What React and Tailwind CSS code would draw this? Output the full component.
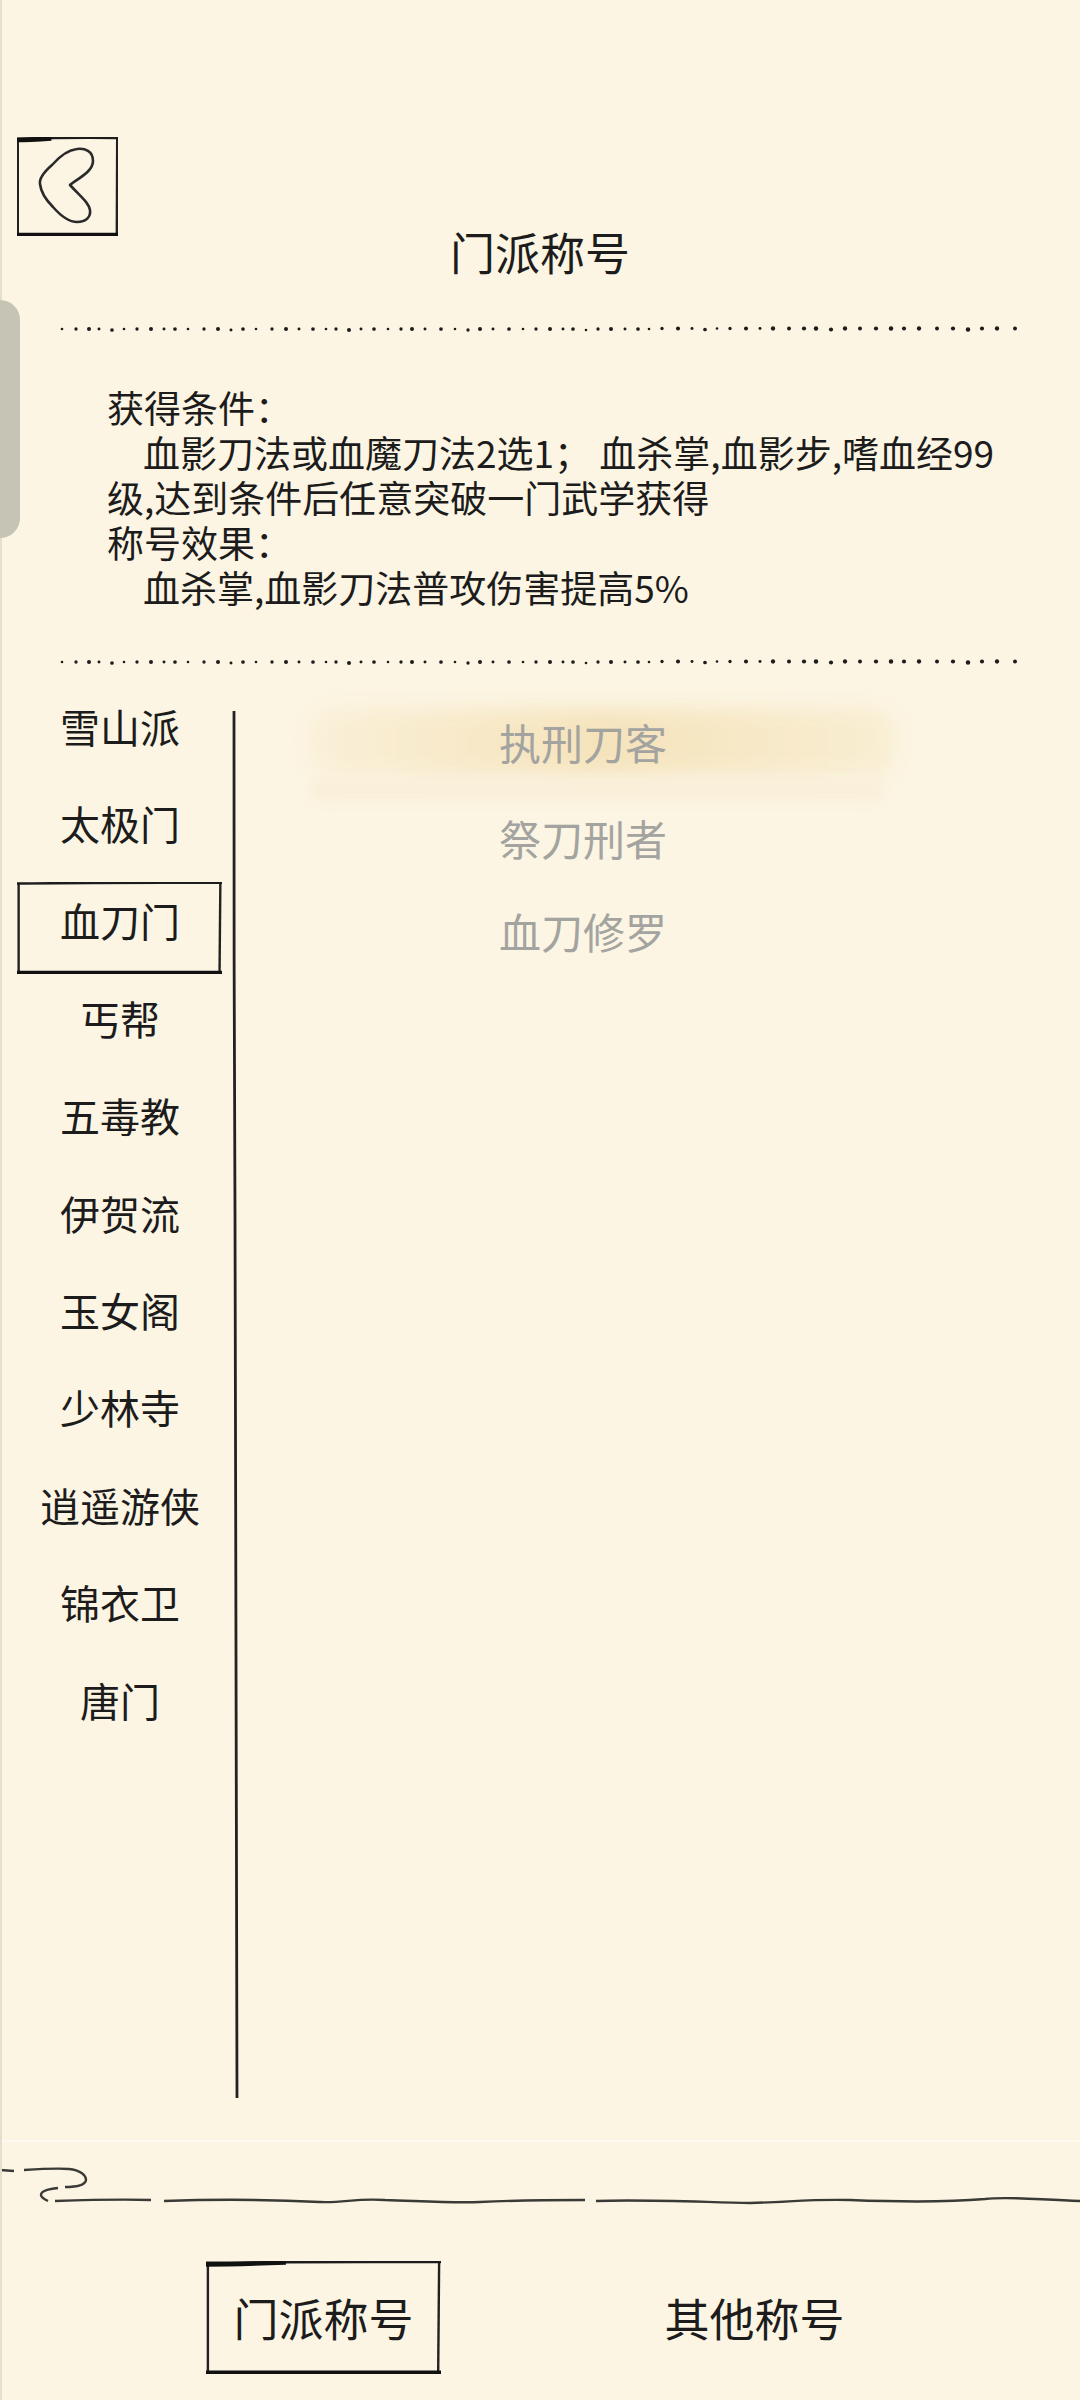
import React from "react";

const sects = ["雪山派", "太极门", "血刀门", "丐帮", "五毒教", "伊贺流", "玉女阁", "少林寺", "逍遥游侠", "锦衣卫", "唐门"];
const titles = ["执刑刀客", "祭刀刑者", "血刀修罗"];

const dotGaps = [15, 14, 11, 14, 13, 14, 15, 14, 12, 14, 17, 15, 14, 13, 14, 17, 15, 14];

const DotLine = () => {
  const dots = [];
  let x = 2;
  let i = 0;
  while (x < 958) {
    const wobble = ((i * 7) % 5) * 0.18;
    dots.push(<circle key={i} cx={x} cy={5 + (i % 9 === 4 ? 1 : 0) + (x > 600 ? -0.5 : 0)} r={x > 700 ? 2 + wobble * 0.3 : 1.3 + wobble} />);
    x += x > 700 ? dotGaps[i % 18] + 1 : dotGaps[i % 18] - 1;
    i += 1;
  }
  return (
    <svg width="960" height="12" viewBox="0 0 960 12" fill="#1c1c1c" className="ml-[60px] block">
      {dots}
    </svg>
  );
};

const SketchBox = ({ thick = false }) => (
  <svg viewBox="0 0 100 100" preserveAspectRatio="none" className="absolute inset-0 h-full w-full">
    <path d="M0.8 1 L0.8 99" stroke="#222" strokeWidth="2.4" vectorEffect="non-scaling-stroke" fill="none" />
    <path d="M99.2 1 L98.8 99" stroke="#222" strokeWidth="2.4" vectorEffect="non-scaling-stroke" fill="none" />
    <path d="M0 1.6 C30 1 60 0.5 100 1" stroke="#1c1c1c" strokeWidth="2.4" vectorEffect="non-scaling-stroke" fill="none" />
    {thick && <path d="M0 3 C10 3 20 2.4 34 1.4" stroke="#111" strokeWidth="4.5" vectorEffect="non-scaling-stroke" fill="none" />}
    <path d="M0 98.4 L100 98.4" stroke="#111" strokeWidth="3.4" vectorEffect="non-scaling-stroke" fill="none" />
  </svg>
);

const BackButton = () => (
  <div className="relative ml-[17px] h-[99px] w-[101px]">
    <SketchBox thick />
    <svg viewBox="0 0 101 99" className="absolute inset-0 h-full w-full" fill="none">
      <path
        d="M53 48 C60 42 76 35 76 24 C76 14 68 11 60 12 C50 13 42 20 35 28 C27 35 22 41 23 47 C24 56 30 64 36 70 C43 78 52 85 60 85 C69 85 74 80 73 73 C72 66 64 60 53 48 Z"
        stroke="#2a2a2a"
        strokeWidth="2.6"
        strokeLinejoin="round"
      />
    </svg>
  </div>
);

const Divider = () => (
  <svg width="8" height="1387" viewBox="0 0 8 1387" fill="none" className="-ml-[1px] mt-[34px] shrink-0">
    <path d="M2 0 C1.5 200 2.5 300 3 500 C3.5 800 4 1100 5 1387" stroke="#222" strokeWidth="2.8" />
  </svg>
);

const FooterLine = () => (
  <svg width="1080" height="70" viewBox="0 0 1080 70" fill="none" className="block" stroke="#3a3a36" strokeWidth="2.4">
    <path d="M0 28 L14 29" />
    <path d="M24 28 C40 27 56 26 69 27 C80 28 86 33 86 38 C85 44 72 45 65 45" />
    <path d="M58 46 C48 47 41 49 41 53 C41 55 44 57 48 59" />
    <path d="M55 59 C85 58 120 57 151 58" />
    <path d="M164 59 C220 57 280 58 320 60 C345 61 355 56 385 58 C420 59 450 61 480 60 C520 58 560 58 585 58" />
    <path d="M596 59 C640 57 700 60 750 61 C790 60 810 57 850 58 C900 60 950 60 985 57 C1010 54 1040 58 1080 59" />
  </svg>
);

const App = () => {
  return (
    <div className="relative h-[2400px] w-[1080px] overflow-hidden bg-[#fcf5e3] font-['Noto_Sans_CJK_SC',sans-serif] text-[#1c1c1c]">
      <div className="absolute inset-y-0 left-0 w-[2px] bg-[#e6dfcc]" />
      <div className="absolute left-0 top-[300px] h-[238px] w-[20px] rounded-r-[20px] bg-[#c6c5b5]" />

      <div>
        <div className="pt-[137px]">
          <BackButton />
        </div>
        <h1 className="h-[31px] text-center text-[45px] font-normal leading-[31px]">门派称号</h1>
        <div className="mt-[57px]">
          <DotLine />
        </div>

        <div className="mt-[49px] h-[272px] pl-[107px] text-[37px] leading-[45px]">
          <p>获得条件：</p>
          <p className="pl-[36px]">血影刀法或血魔刀法2选1； 血杀掌,血影步,嗜血经99</p>
          <p>级,达到条件后任意突破一门武学获得</p>
          <p>称号效果：</p>
          <p className="pl-[36px]">血杀掌,血影刀法普攻伤害提高5%</p>
        </div>
        <DotLine />

        <div className="mt-[8px] flex h-[1463px]">
          <div className="w-[233px] shrink-0">
            {sects.map((name, i) => (
              <div key={name} className="relative flex h-[97.4px] items-center justify-center text-[40px]">
                {i === 2 && (
                  <div className="absolute left-[17px] top-[10px] h-[92px] w-[205px]">
                    <SketchBox />
                  </div>
                )}
                <span className="pl-[7px]">{name}</span>
              </div>
            ))}
          </div>
          <Divider />
          <div className="w-[686px] pt-[16px]">
            {titles.map((name, i) => (
              <div key={name} className={`relative flex h-[96px] items-center justify-center text-[42px] text-[#a3a3a0] ${i === 2 ? "-mt-[3px]" : ""}`}>
                {i === 0 && (
                  <>
                    <div className="absolute left-[70px] top-[16px] h-[66px] w-[585px] rounded-[24px] bg-gradient-to-r from-[#faf0d8] via-[#f5e3bb] to-[#f9eed3] blur-[10px]" />
                    <div className="absolute left-[72px] top-[86px] h-[22px] w-[570px] rounded-[8px] bg-[#f9efd9] blur-[6px]" />
                  </>
                )}
                <span className="relative">{name}</span>
              </div>
            ))}
          </div>
        </div>

        <div className="h-[260px] border-t-2 border-[#fdfaf1]">
          <FooterLine />
          <div className="mt-[49px] flex">
            <div className="relative ml-[206px] flex h-[113px] w-[235px] items-center justify-center text-[45px]">
              <SketchBox thick />
              门派称号
            </div>
            <div className="ml-[196px] flex h-[113px] w-[235px] items-center justify-center text-[45px]">其他称号</div>
          </div>
        </div>
      </div>
    </div>
  );
};

export default App;
